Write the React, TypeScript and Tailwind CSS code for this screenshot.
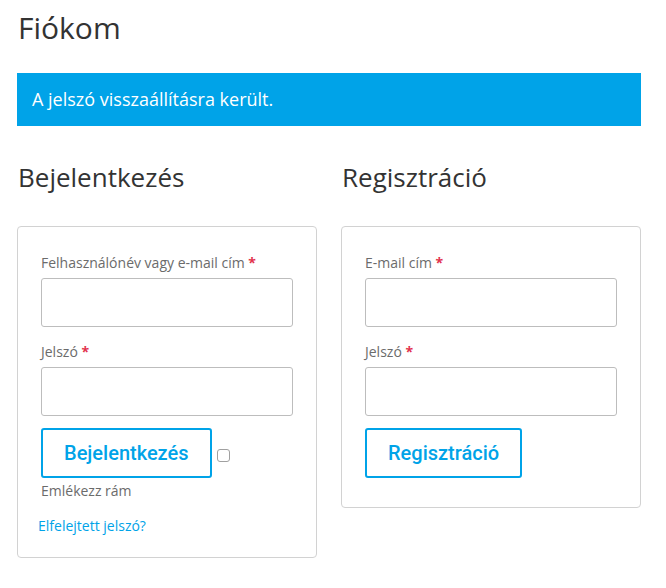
import React from "react";

const font = { fontFamily: '"Open Sans", sans-serif' };

function Label({ text }: { text: string }) {
    return (
        <label className="block text-[14px] leading-[20px] text-[#6b6b6b] mb-[5px]">
            {text} <span className="font-bold text-[#e2334d]">*</span>
        </label>
    );
}

function Input({ type = "text" }: { type?: string }) {
    return (
        <input
            type={type}
            className="block w-full h-[49px] border border-[#bdbdbd] rounded-[3px] bg-white px-3 outline-none"
        />
    );
}

function Button({ text }: { text: string }) {
    return (
        <button className="h-[50px] px-[21px] border-2 border-[#00a3e8] rounded-[3px] bg-white text-[#00a3e8] text-[20px] font-medium font-['Roboto',sans-serif]">
            {text}
        </button>
    );
}

export default function App() {
    return (
        <div className="bg-white min-h-[588px] pl-[17px] w-[641px]" style={font}>
            <h1 className="pt-[10px] pl-[1px] text-[30px] leading-[36px] text-[#333]">Fiókom</h1>

            <div className="mt-[27px] h-[53px] flex items-center px-[15px] bg-[#00a3e8] text-white text-[18px]">
                A jelszó visszaállításra került.
            </div>

            <div className="mt-[35px] grid grid-cols-2 gap-[24px] items-start">
                <div>
                    <h2 className="pl-[1px] text-[26px] leading-[32px] text-[#333]">Bejelentkezés</h2>
                    <div className="mt-[33px] border border-[#d2d2d2] rounded-[4px] px-[23px] pt-[26px] pb-[21px]">
                        <Label text="Felhasználónév vagy e-mail cím" />
                        <Input />
                        <div className="mt-[15px]">
                            <Label text="Jelszó" />
                            <Input type="password" />
                        </div>
                        <div className="mt-[12px] flex items-center">
                            <Button text="Bejelentkezés" />
                            <input
                                type="checkbox"
                                className="ml-[5px] mt-[4px] w-[13px] h-[13px] appearance-none border border-[#a0a0a0] rounded-[3px] bg-white"
                            />
                        </div>
                        <p className="mt-[3px] text-[14px] leading-[20px] text-[#6b6b6b]">Emlékezz rám</p>
                        <a href="#" className="block mt-[15px] -ml-[3px] text-[14px] leading-[20px] text-[#00a3e8]">
                            Elfelejtett jelszó?
                        </a>
                    </div>
                </div>
                <div>
                    <h2 className="pl-[1px] text-[26px] leading-[32px] text-[#333]">Regisztráció</h2>
                    <div className="mt-[33px] border border-[#d2d2d2] rounded-[4px] px-[23px] pt-[26px] pb-[29px]">
                        <Label text="E-mail cím" />
                        <Input type="email" />
                        <div className="mt-[15px]">
                            <Label text="Jelszó" />
                            <Input type="password" />
                        </div>
                        <div className="mt-[12px]">
                            <Button text="Regisztráció" />
                        </div>
                    </div>
                </div>
            </div>
        </div>
    );
}
